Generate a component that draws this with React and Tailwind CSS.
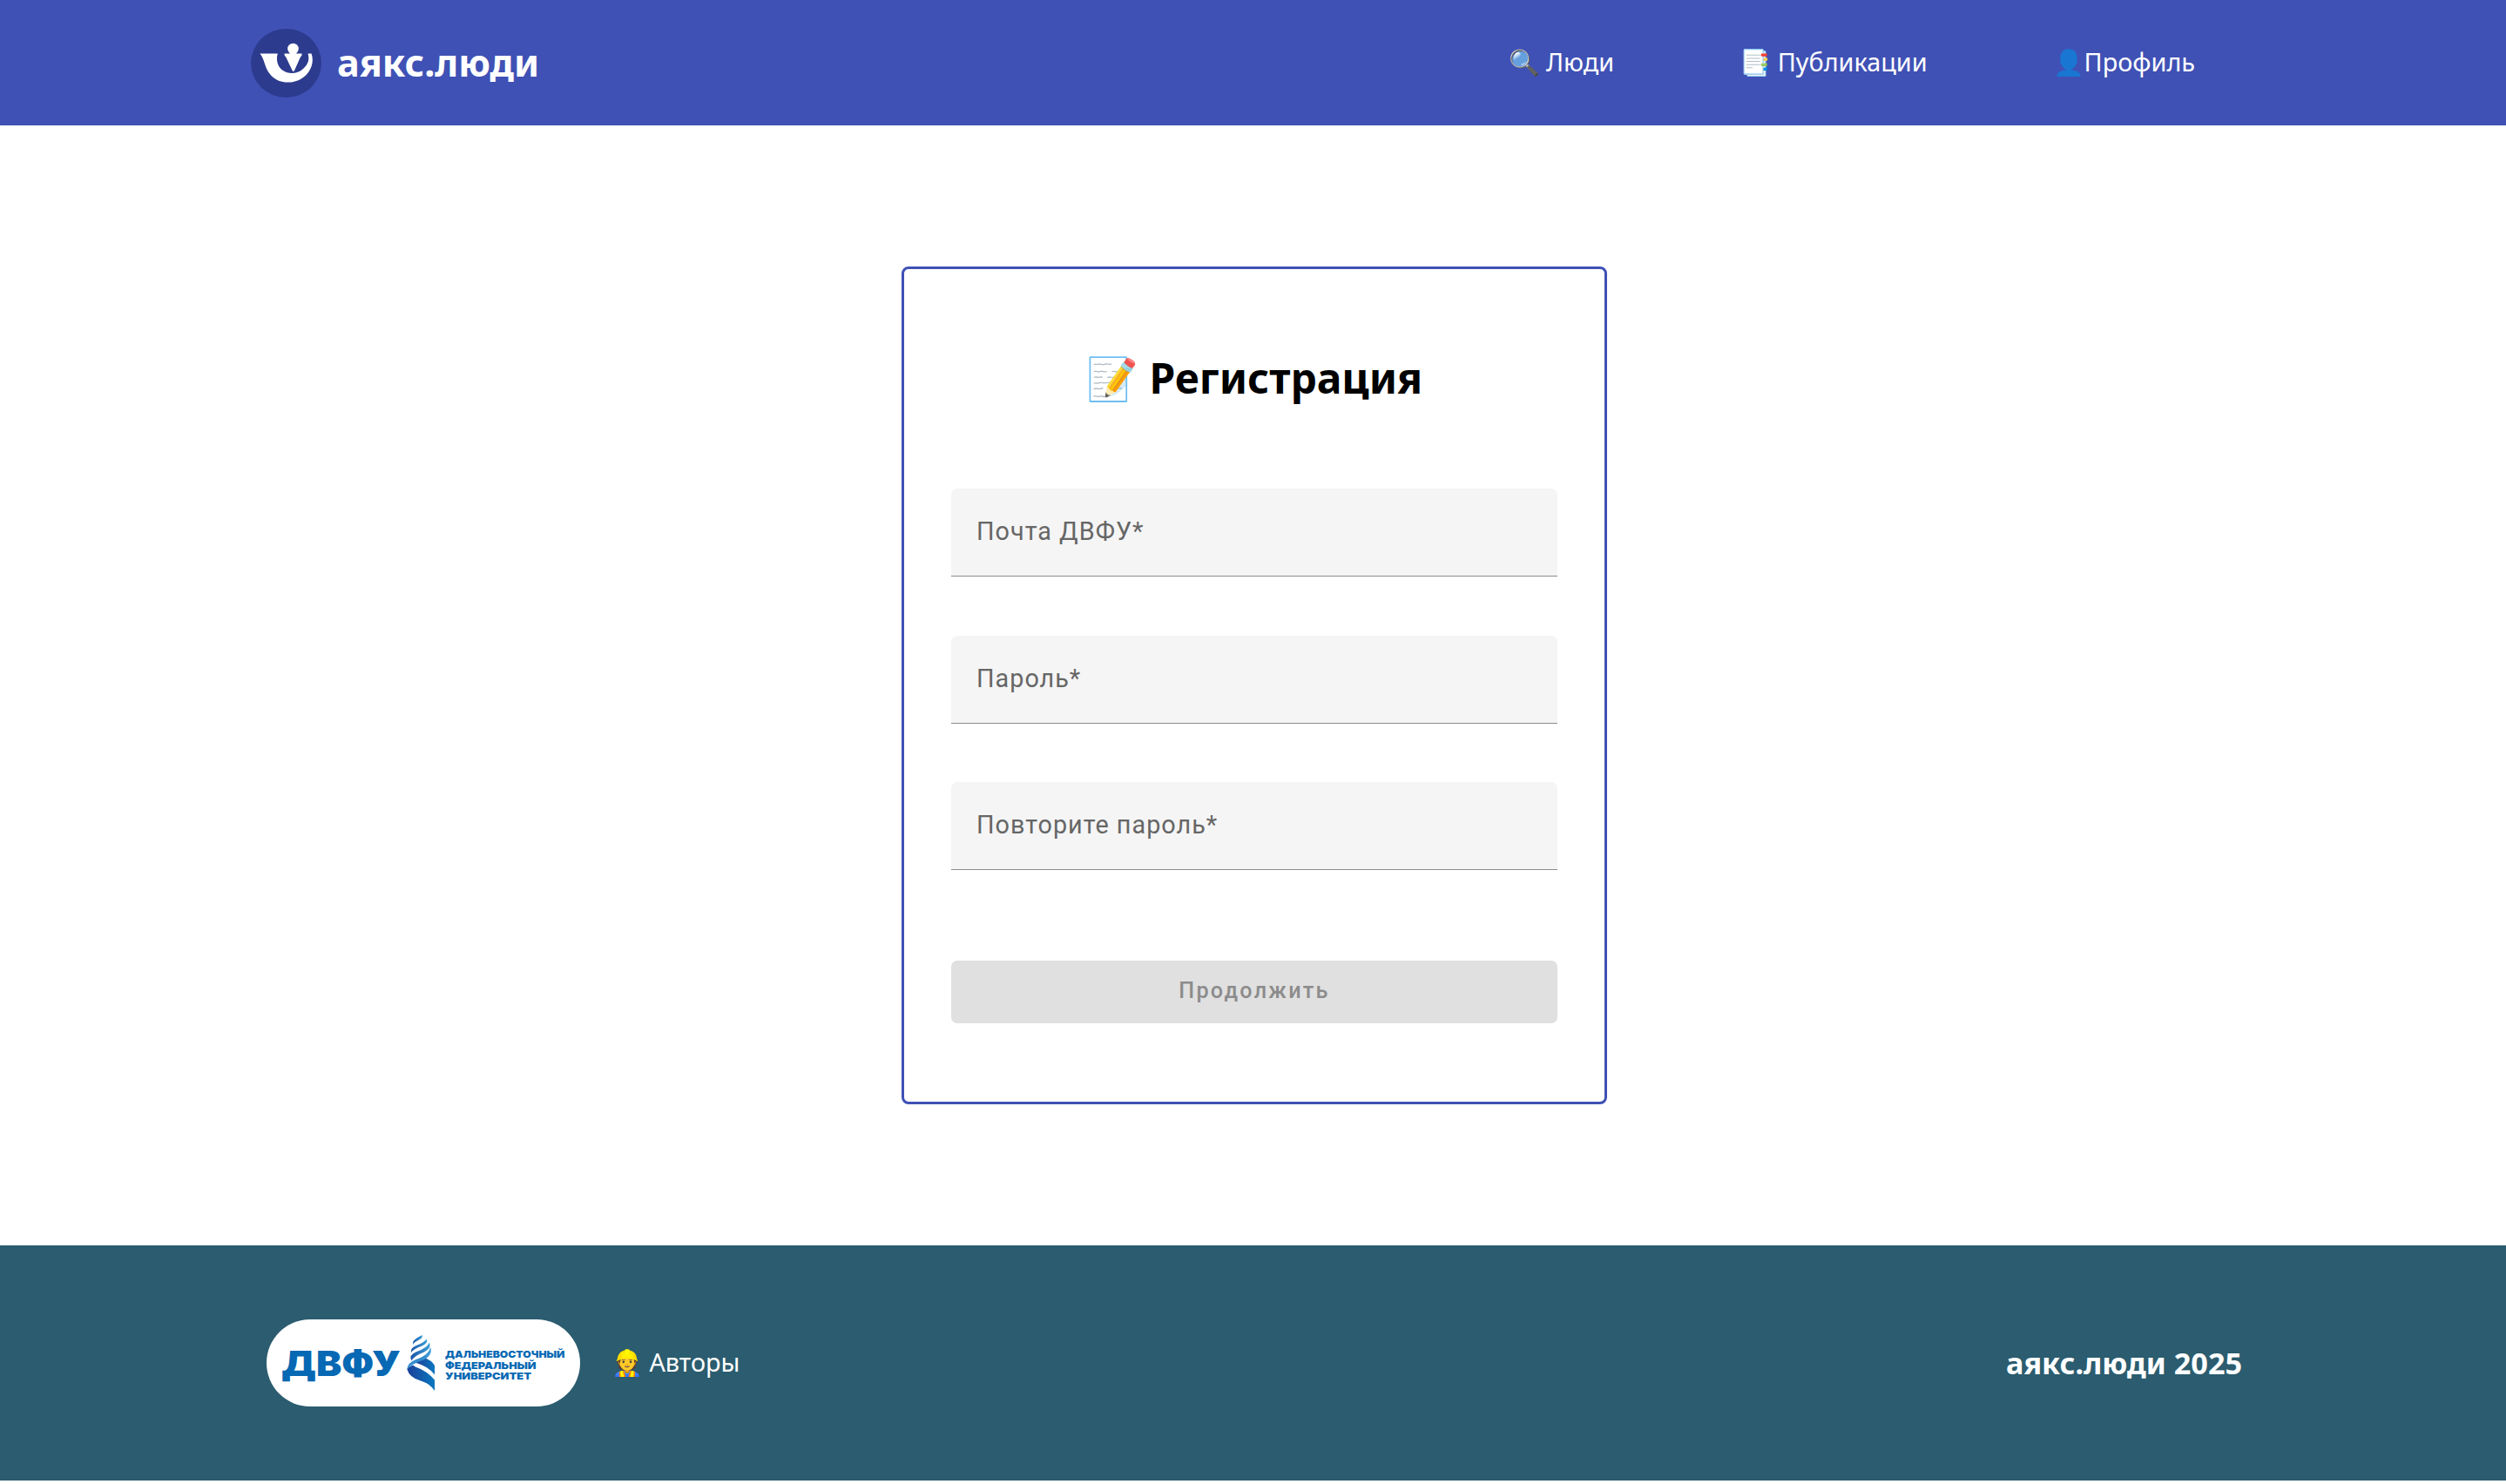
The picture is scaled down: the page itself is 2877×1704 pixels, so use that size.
function BrandMark() {
  return (
    <svg className="h-20 w-[81px]" viewBox="0 0 81 80" aria-hidden="true">
      <ellipse cx="40.5" cy="40.5" rx="40.5" ry="39.5" fill="#2d3b8e" />
      <path
        d="M10.5 29.4H30.8C28.5 37 31 45 37 49C43 53.5 54 53 60 47C66 41.5 67.5 36 65.5 29.4H69.5C73 39 69 48.5 63 54.5C57 60.5 49 62.6 43 62.6C33 62.6 25 58.5 20 50.5C15.5 43 15.5 36 10.5 29.4Z"
        fill="#fff"
      />
      <circle cx="48.5" cy="24" r="6.3" fill="#fff" />
      <path d="M45 27H52V29.4H58.5V31.6L56.7 34L50 49Q48.8 50.8 47.6 49L40.5 34L38.6 31.6V29.4H45Z" fill="#fff" />
    </svg>
  );
}

function UniversityLogo() {
  return (
    <svg className="h-[100px] w-[360px] rounded-full bg-white" viewBox="0 0 360 100" role="img">
      <defs>
        <linearGradient id="band" x1="0" x2="1" y1="0" y2="0">
          <stop offset="0" stopColor="#1d55a8" />
          <stop offset="1" stopColor="#3a9fd9" />
        </linearGradient>
        <linearGradient id="sweep" x1="0" x2="1" y1="1" y2="0">
          <stop offset="0" stopColor="#3d97d6" />
          <stop offset="0.5" stopColor="#2f87cb" />
          <stop offset="1" stopColor="#45a6dc" />
        </linearGradient>
        <linearGradient id="tail" x1="0" x2="1" y1="0" y2="0">
          <stop offset="0" stopColor="#1c3f98" />
          <stop offset="1" stopColor="#0a78c0" />
        </linearGradient>
      </defs>
      <g fill="#0768b3" className="font-['Inter',sans-serif] font-black">
        <text x="17" y="65" fontSize="40" textLength="137" lengthAdjust="spacingAndGlyphs">ДВФУ</text>
        <text x="205" y="44.2" fontSize="11" textLength="137.5" lengthAdjust="spacingAndGlyphs">ДАЛЬНЕВОСТОЧНЫЙ</text>
        <text x="205" y="56.5" fontSize="11" textLength="104.5" lengthAdjust="spacingAndGlyphs">ФЕДЕРАЛЬНЫЙ</text>
        <text x="205" y="68.8" fontSize="11" textLength="99" lengthAdjust="spacingAndGlyphs">УНИВЕРСИТЕТ</text>
      </g>
      <path d="M172 47.5L180 43.5Q190 47 193 53V63.5Q186 54 172 50Z" fill="url(#tail)" />
      <path d="M161.3 57Q163 54.5 168 52.5L171 54.5Q184 59 193 69.5V82Q188 74 177 70.5Q164 67 161.3 57Z" fill="url(#tail)" />
      <path d="M168 29Q166 24 178.5 18Q180 21 175.5 23.2Q169.500 26 168 29Z" fill="url(#band)" />
      <path d="M166 38Q164.500 32.500 173 29.500Q181 26.500 183.500 22.500Q186 26.500 179.500 30Q168.500 34 166 38Z" fill="url(#band)" />
      <path d="M166.500 47.500Q162.500 41 172.500 37Q184 33 187 26.500Q189.500 33 181 37.500Q169 42 166.500 47.500Z" fill="url(#band)" />
      <path d="M161.3 58Q161 50 171.500 46Q186.500 41 188 31.500Q191.500 40.500 180.500 46.500Q164 52 161.3 58Z" fill="url(#sweep)" />
    </svg>
  );
}

function Field({ label }) {
  return (
    <label className="flex h-[101px] items-center rounded-t-[7px] border-b border-[#8c8c8c] bg-[#f5f5f5] pl-[29px] font-['Roboto',sans-serif] text-[28.8px] tracking-[1px] text-[#666]">
      {label}
    </label>
  );
}

export default function App() {
  return (
    <div className="flex h-[1704px] w-[2877px] flex-col bg-white font-['Noto_Sans',sans-serif]">
      <header className="flex h-36 shrink-0 items-center justify-between bg-[#3f51b5] pr-[357px] pl-[288px] text-white">
        <a className="flex items-center gap-[18px]">
          <BrandMark />
          <span className="text-[43.2px] font-bold">аякс.люди</span>
        </a>
        <nav className="flex gap-[144px] pb-0.5 text-[28.8px]">
          <a>🔍 Люди</a>
          <a>📑 Публикации</a>
          <a>👤Профиль</a>
        </nav>
      </header>
      <main className="flex h-[1286px] shrink-0 items-center justify-center pl-[3px]">
        <form className="flex h-[962px] w-[810px] flex-col rounded-lg border-3 border-[#3f51b5] px-[54px] pt-[89px]">
          <h1 className="text-center text-[48px] leading-[72px] font-bold text-black">📝 Регистрация</h1>
          <div className="mt-[91px] flex flex-col">
            <Field label="Почта ДВФУ*" />
            <div className="mt-[68px] mb-[67px]">
              <Field label="Пароль*" />
            </div>
            <Field label="Повторите пароль*" />
          </div>
          <button
            type="button"
            className="mt-[104px] h-[72px] rounded-[7px] bg-[#e0e0e0] pb-0.5 font-['Roboto',sans-serif] text-[25.2px] font-medium tracking-[2.25px] text-[#8c8c8c]"
          >
            Продолжить
          </button>
        </form>
      </main>
      <footer className="flex h-[270px] shrink-0 items-center justify-between bg-[#2b5c6f] pr-[303px] pl-[306px] text-white">
        <div className="flex items-center gap-9">
          <UniversityLogo />
          <a className="pb-0.5 text-[28.8px]">👷 Авторы</a>
        </div>
        <span className="text-[34.2px] font-bold">аякс.люди 2025</span>
      </footer>
    </div>
  );
}
